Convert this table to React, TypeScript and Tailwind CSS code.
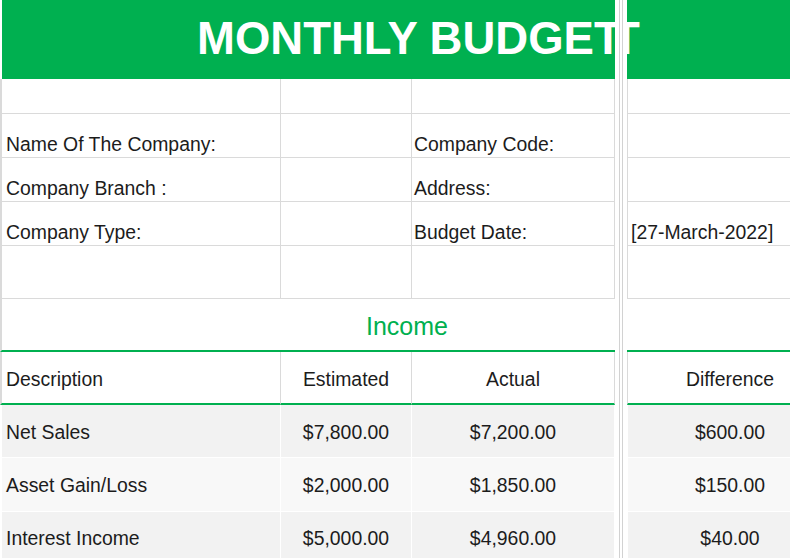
import * as React from 'react';

// sheet is a frozen-pane Excel view: columns A-C on the left, column D past the split
const line = 'border-[#dadada]';

type Info = { a?: string; c?: string; d?: string; h: string };

const infoRows: Info[] = [
  { h: 'h-[35px]' },
  { a: 'Name Of The Company:', c: 'Company Code:', h: 'h-[44px]' },
  { a: 'Company Branch :', c: 'Address:', h: 'h-[44px]' },
  { a: 'Company Type:', c: 'Budget Date:', d: '[27-March-2022]', h: 'h-[44px]' },
  { h: 'h-[53px]' },
];

const income = [
  { name: 'Net Sales', est: '$7,800.00', act: '$7,200.00', diff: '$600.00', bg: 'bg-[#f2f2f2]', h: 'h-[53px] pt-[2px]' },
  { name: 'Asset Gain/Loss', est: '$2,000.00', act: '$1,850.00', diff: '$150.00', bg: 'bg-[#f8f8f8]', h: 'h-[54px]' },
  { name: 'Interest Income', est: '$5,000.00', act: '$4,960.00', diff: '$40.00', bg: 'bg-[#f2f2f2]', h: 'h-[54px] pb-[2px]' },
];

export default function App() {
  return (
    <div className="flex h-[558px] w-[790px] overflow-hidden bg-white font-['Liberation_Sans',Arial,sans-serif] text-[19.4px] leading-[22px] text-[#1c1c1c]">
      {/* Left pane */}
      <div className="flex w-[615px] shrink-0 flex-col">
        <div className="flex h-[79px] shrink-0 pl-[2px]">
          <div className="w-[613px] overflow-hidden bg-[#00b050] pl-[195px] pt-[16px]">
            <span className="whitespace-nowrap text-[45.5px] font-bold leading-none text-white">MONTHLY BUDGET</span>
          </div>
        </div>

        {infoRows.map((r, i) => (
          <div key={i} className={`flex shrink-0 ${r.h}`}>
            <div className={`flex w-[281px] items-end border-b border-l-2 border-r ${line} pb-[2px] pl-[4px]`}>{r.a}</div>
            <div className={`w-[131px] border-b border-r ${line}`} />
            <div className={`flex w-[203px] items-end border-b border-r ${line} pb-[2px] pl-[2px]`}>{r.c}</div>
          </div>
        ))}

        <div className={`flex h-[53px] shrink-0 items-center border-b-2 border-l-2 border-b-[#00b050] border-l-[#dadada] pl-[364px] pt-[2px]`}>
          <span className="text-[25px] leading-[30px] text-[#00b050]">Income</span>
        </div>

        <div className="flex h-[53px] shrink-0">
          <div className={`flex w-[281px] items-center border-b-2 border-l-2 border-r border-b-[#00b050] ${line} pl-[4px] pt-[2px]`}>Description</div>
          <div className={`flex w-[131px] items-center justify-center border-b-2 border-r border-b-[#00b050] ${line} pt-[2px]`}>Estimated</div>
          <div className={`flex w-[203px] items-center justify-center border-b-2 border-r border-b-[#00b050] ${line} pt-[2px]`}>Actual</div>
        </div>

        {income.map((r) => (
          <div key={r.name} className={`flex shrink-0 ${r.h.split(' ')[0]}`}>
            <div className={`flex w-[281px] items-center border-b border-l-2 border-r border-white ${r.bg} pl-[4px] ${r.h.split(' ')[1] ?? ''}`}>{r.name}</div>
            <div className={`flex w-[131px] items-center justify-center border-b border-r border-white ${r.bg} ${r.h.split(' ')[1] ?? ''}`}>{r.est}</div>
            <div className={`flex w-[203px] items-center justify-center border-b border-r border-white ${r.bg} ${r.h.split(' ')[1] ?? ''}`}>{r.act}</div>
          </div>
        ))}
      </div>

      {/* Freeze split */}
      <div className="flex w-[12px] shrink-0">
        <div className="w-[4px] bg-white" />
        <div className="w-px bg-[#d2d2d2]" />
        <div className="w-[2px] bg-white" />
        <div className="w-px bg-[#d2d2d2]" />
        <div className="w-[4px] bg-white" />
      </div>

      {/* Right pane: column D */}
      <div className="flex min-w-0 flex-1 flex-col overflow-hidden">
        <div className="h-[79px] w-[205px] shrink-0 overflow-hidden bg-[#00b050] pt-[16px]">
          <span aria-hidden className="ml-[-15px] whitespace-nowrap text-[45.5px] font-bold leading-none text-white">T</span>
        </div>

        {infoRows.map((r, i) => (
          <div key={i} className={`flex w-[205px] shrink-0 items-end border-b border-l ${line} pb-[2px] pl-[3px] ${r.h}`}>{r.d}</div>
        ))}

        <div className="h-[53px] w-[205px] shrink-0 border-b-2 border-b-[#00b050]" />

        <div className={`flex h-[53px] w-[205px] shrink-0 items-center justify-center border-b-2 border-l border-b-[#00b050] ${line} pt-[2px]`}>Difference</div>

        {income.map((r) => (
          <div key={r.name} className={`flex w-[205px] shrink-0 items-center justify-center border-b border-l border-white ${r.bg} ${r.h}`}>{r.diff}</div>
        ))}
      </div>
    </div>
  );
}
